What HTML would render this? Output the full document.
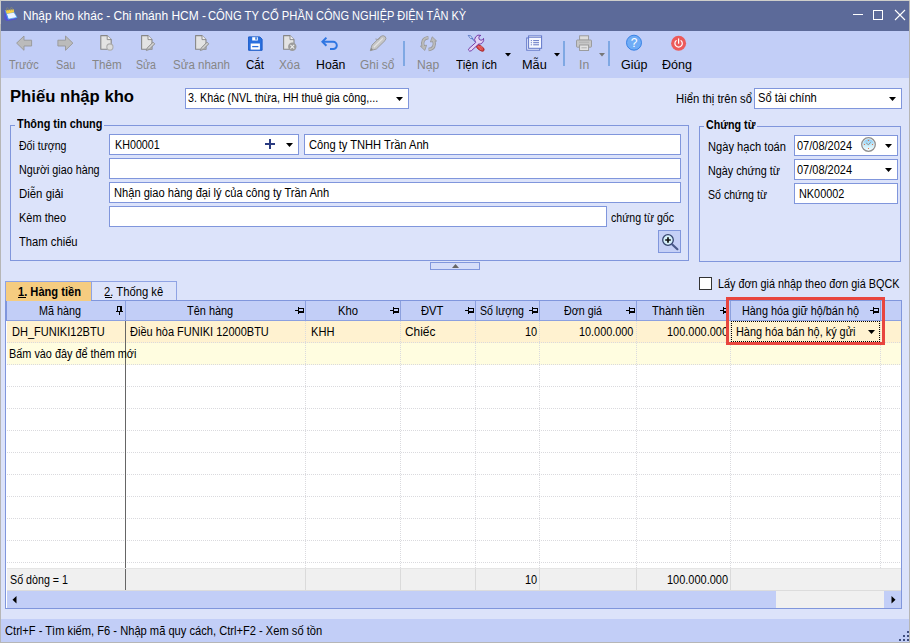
<!DOCTYPE html>
<html lang="vi"><head><meta charset="utf-8"><title>Nhập kho khác</title>
<style>
html,body{margin:0;padding:0}
body{width:910px;height:643px;position:relative;overflow:hidden;background:#DCE3FA;font-family:"Liberation Sans",sans-serif;font-size:12px;color:#000}
.t{position:absolute;white-space:nowrap;line-height:20px;transform-origin:0 50%}
.r{position:absolute;box-sizing:border-box}
</style></head><body>
<div class="r" style="left:0px;top:0px;width:910px;height:643px;background:#B6B6B6;"></div>
<div class="r" style="left:1px;top:1px;width:908px;height:640px;background:#DCE3FA;"></div>
<div class="r" style="left:0px;top:0px;width:910px;height:1px;background:#CECECA;"></div>
<div class="r" style="left:0px;top:0px;width:1px;height:24px;background:#CACAC8;"></div>
<div class="r" style="left:1px;top:1px;width:908px;height:30px;background:#5C6A99;"></div>
<div class="t" style="left:23.2px;top:6px;color:#fff;transform:scaleX(0.9977);">Nhập kho khác - Chi nhánh HCM -</div>
<div class="t" style="left:208.2px;top:6px;color:#fff;transform:scaleX(0.9354);">CÔNG TY CỔ PHẦN</div>
<div class="t" style="left:315.6px;top:6px;color:#fff;transform:scaleX(0.9182);">CÔNG NGHIỆP ĐIỆN TÂN KỲ</div>
<svg class="r" style="left:3px;top:5px" width="16" height="18" viewBox="3 5 16 18"><path d="M4.3 9.8 L5.3 10.3 L8.2 19 L16.6 17.6 L16.2 19.5 L6.8 21 L4.4 19.2 Z" fill="#5552D2"/><path d="M6.2 13.6 L14 12.2 L17.1 17.4 L8.2 19.2 Z" fill="#ECF3FF" stroke="#46A2F0" stroke-width="0.7" stroke-linejoin="round"/><path d="M5.1 10.3 L13.7 9.2 L14.1 12.3 L6.3 13.8 Z" fill="#F7D044"/><path d="M5.1 10.3 L6.3 13.8 L8.2 19.2" fill="none" stroke="#3C8CF0" stroke-width="0.8"/><path d="M6.6 11.2 V8.6 Q7.4 6.6 8.2 8.6 V10.8 M10.6 10.6 V8.2 Q11.5 6.2 12.4 8.2 V10.4" fill="none" stroke="#8E8C6E" stroke-width="0.7"/></svg>
<svg class="r" style="left:850px;top:8px" width="58" height="14" viewBox="0 0 58 14"><path d="M3 6.5 H13" stroke="#fff" stroke-width="1"/><rect x="23.5" y="2.5" width="9" height="9" fill="none" stroke="#fff" stroke-width="1"/><path d="M45 2 L55 12 M55 2 L45 12" stroke="#fff" stroke-width="1.1"/></svg>
<div class="r" style="left:1px;top:31px;width:908px;height:47px;background:#C2CEF7;"></div>
<div class="t" style="left:8.8px;top:55px;color:#868686;transform:scaleX(0.9090);">Trước</div>
<div class="t" style="left:55.6px;top:55px;color:#868686;transform:scaleX(0.9086);">Sau</div>
<div class="t" style="left:91.6px;top:55px;color:#868686;transform:scaleX(0.9715);">Thêm</div>
<div class="t" style="left:136.2px;top:55px;color:#868686;transform:scaleX(0.8806);">Sửa</div>
<div class="t" style="left:173.2px;top:55px;color:#868686;transform:scaleX(0.9594);">Sửa nhanh</div>
<div class="t" style="left:245.6px;top:55px;transform:scaleX(0.9639);">Cắt</div>
<div class="t" style="left:279.2px;top:55px;color:#868686;transform:scaleX(0.9835);">Xóa</div>
<div class="t" style="left:315.6px;top:55px;transform:scaleX(1.0248);">Hoãn</div>
<div class="t" style="left:360.2px;top:55px;color:#868686;transform:scaleX(0.9919);">Ghi sổ</div>
<div class="t" style="left:416.8px;top:55px;color:#868686;transform:scaleX(1.0085);">Nạp</div>
<div class="t" style="left:455.6px;top:55px;transform:scaleX(0.9706);">Tiện ích</div>
<div class="t" style="left:521.8px;top:55px;transform:scaleX(1.0624);">Mẫu</div>
<div class="t" style="left:578.8px;top:55px;color:#868686;transform:scaleX(1.0192);">In</div>
<div class="t" style="left:621.2px;top:55px;transform:scaleX(1.0415);">Giúp</div>
<div class="t" style="left:662.2px;top:55px;transform:scaleX(1.0458);">Đóng</div>
<div class="r" style="left:403px;top:41px;width:1.6px;height:24.6px;background:#7FA8E3;"></div>
<div class="r" style="left:563px;top:41px;width:1.6px;height:24.6px;background:#7FA8E3;"></div>
<div class="r" style="left:608px;top:41px;width:1.6px;height:24.6px;background:#7FA8E3;"></div>
<svg class="r" style="left:504.5px;top:52.5px" width="6" height="4" viewBox="0 0 6 4"><path d="M0 0 H6 L3 3.5 Z" fill="#000"/></svg>
<svg class="r" style="left:554px;top:52.5px" width="6" height="4" viewBox="0 0 6 4"><path d="M0 0 H6 L3 3.5 Z" fill="#000"/></svg>
<svg class="r" style="left:599px;top:52.5px" width="6" height="4" viewBox="0 0 6 4"><path d="M0 0 H6 L3 3.5 Z" fill="#777"/></svg>
<svg class="r" style="left:15px;top:34px" width="19" height="18" viewBox="15 34 19 18"><path d="M16.6 43.1 L24 36 V40.2 H31.6 V46 H24 V50.3 Z" fill="#BBBBBB" stroke="#969696" stroke-width="0.9" stroke-linejoin="miter"/></svg>
<svg class="r" style="left:56px;top:34px" width="19" height="18" viewBox="56 34 19 18"><path d="M72.9 43.1 L65.5 36 V40.2 H57.9 V46 H65.5 V50.3 Z" fill="#BBBBBB" stroke="#969696" stroke-width="0.9" stroke-linejoin="miter"/></svg>
<svg class="r" style="left:99px;top:34px" width="17" height="19" viewBox="99 34 17 19"><path d="M100.8 35.6 H107.2 L111.2 39.6 V49.2 H100.8 Z" fill="#E3E3E3" stroke="#878787" stroke-width="1.1" stroke-linejoin="round"/><path d="M107.2 35.6 V39.6 H111.2" fill="#EFEFEF" stroke="#878787" stroke-width="0.9" stroke-linejoin="round"/><circle cx="109.9" cy="47" r="3.1" fill="#DCDCDC" stroke="#ADADAD" stroke-width="1.1"/></svg>
<svg class="r" style="left:140px;top:34px" width="17" height="19" viewBox="140 34 17 19"><path d="M141.6 35.6 H148 L152 39.6 V49.2 H141.6 Z" fill="#E3E3E3" stroke="#878787" stroke-width="1.1" stroke-linejoin="round"/><path d="M148 35.6 V39.6 H152" fill="#EFEFEF" stroke="#878787" stroke-width="0.9" stroke-linejoin="round"/><path d="M146.3 50.6 L147.3 47.8 L153 42.1 L154.8 43.9 L149.1 49.6 Z" fill="#BDBDBD" stroke="#8C8C8C" stroke-width="0.8" stroke-linejoin="round"/><path d="M148.6 48.2 L153.4 43.4" stroke="#E8E8E8" stroke-width="0.7"/></svg>
<svg class="r" style="left:194px;top:34px" width="17" height="19" viewBox="194 34 17 19"><path d="M195.6 35.6 H202 L206 39.6 V49.2 H195.6 Z" fill="#E3E3E3" stroke="#878787" stroke-width="1.1" stroke-linejoin="round"/><path d="M202 35.6 V39.6 H206" fill="#EFEFEF" stroke="#878787" stroke-width="0.9" stroke-linejoin="round"/><path d="M200.3 50.6 L201.3 47.8 L207 42.1 L208.8 43.9 L203.1 49.6 Z" fill="#BDBDBD" stroke="#8C8C8C" stroke-width="0.8" stroke-linejoin="round"/><path d="M202.6 48.2 L207.4 43.4" stroke="#E8E8E8" stroke-width="0.7"/></svg>
<svg class="r" style="left:247px;top:35px" width="17" height="17" viewBox="247 35 17 17"><path d="M248.6 36.9 H259.8 L262.1 39.2 V50.3 H248.6 Z" fill="#2A70DE" stroke="#1C5CC8" stroke-width="1" stroke-linejoin="round"/><rect x="252.2" y="37.2" width="5.6" height="3.3" fill="#fff"/><rect x="255.3" y="37.2" width="1.5" height="2.5" fill="#2A70DE"/><rect x="250.7" y="43.5" width="9.2" height="6.1" fill="#fff"/><path d="M252.2 46.6 H258.4" stroke="#2A70DE" stroke-width="1.3"/></svg>
<svg class="r" style="left:282px;top:34px" width="17" height="19" viewBox="282 34 17 19"><path d="M283.6 35.6 H290 L294 39.6 V49.2 H283.6 Z" fill="#E3E3E3" stroke="#878787" stroke-width="1.1" stroke-linejoin="round"/><path d="M290 35.6 V39.6 H294" fill="#EFEFEF" stroke="#878787" stroke-width="0.9" stroke-linejoin="round"/><circle cx="292.3" cy="46.8" r="4.2" fill="#9C9C9C"/><path d="M290.4 44.9 L294.2 48.7 M294.2 44.9 L290.4 48.7" stroke="#EDEDED" stroke-width="1.1"/></svg>
<svg class="r" style="left:320px;top:35px" width="20" height="17" viewBox="320 35 20 17"><path d="M326.4 37.6 L322.4 41.8 L326.4 45.8" fill="none" stroke="#2F76E2" stroke-width="2" stroke-linejoin="miter"/><path d="M323.2 41.8 H333.2 A3.6 3.6 0 0 1 333.2 49 H330" fill="none" stroke="#2F76E2" stroke-width="2"/></svg>
<svg class="r" style="left:369px;top:34px" width="18" height="18" viewBox="369 34 18 18"><path d="M370.3 50.7 L372 45 L380.8 36.4 Q383.2 34.8 385.2 36.6 Q386.8 38.6 385 40.6 L376.4 49 Z" fill="#C6C6C6" stroke="#979797" stroke-width="0.9" stroke-linejoin="round"/><path d="M373.8 47.2 L382.8 38.4" stroke="#E4E4E4" stroke-width="1.2"/><path d="M375.4 39 L378.4 39.6 L380.4 37.4" fill="none" stroke="#979797" stroke-width="0.9"/><path d="M370.3 50.7 L371.2 47.8 L373 49.6 Z" fill="#8A8A8A"/></svg>
<svg class="r" style="left:419px;top:35px" width="19" height="17" viewBox="419 35 19 17"><path d="M428.4 37.7 C423.2 38.2 421.8 42 423.2 46.4" fill="none" stroke="#969696" stroke-width="3.3"/><path d="M420.4 46.2 L426.6 45.2 L424.8 50.4 Z" fill="#BBBBBB" stroke="#969696" stroke-width="0.8" stroke-linejoin="round"/><path d="M428.2 37.7 C423.2 38.2 421.8 42 423.3 46.8" fill="none" stroke="#BBBBBB" stroke-width="1.8"/><path d="M428.6 49.5 C433.8 49 435.2 45.2 433.8 40.8" fill="none" stroke="#969696" stroke-width="3.3"/><path d="M436.6 41 L430.4 42 L432.2 36.8 Z" fill="#BBBBBB" stroke="#969696" stroke-width="0.8" stroke-linejoin="round"/><path d="M428.8 49.5 C433.8 49 435.2 45.2 433.7 40.4" fill="none" stroke="#BBBBBB" stroke-width="1.8"/></svg>
<svg class="r" style="left:467px;top:34px" width="18" height="18" viewBox="467 34 18 18"><path d="M468.2 35.4 L470.8 35.9 L472.8 38.8 L470.4 38.4 Z" fill="#EEF4FF" stroke="#4668BE" stroke-width="0.8" stroke-linejoin="round"/><path d="M472.2 38.4 L475 41.8" stroke="#4668BE" stroke-width="1"/><path d="M475.8 44.6 L477.6 43.6 L479 44.8" fill="none" stroke="#7A2C9E" stroke-width="0.9"/><ellipse cx="480.3" cy="48" rx="4.4" ry="2.1" transform="rotate(34 480.3 48)" fill="#DE4E4C" stroke="#A31C1C" stroke-width="0.9"/><path d="M478.2 46 L479.8 47.4 M479.6 48.4 L481.2 49.6 M480 45.6 L482.6 47.8" stroke="#F0908C" stroke-width="0.6"/><path d="M469 48.5 L475.75 42.5 A4.5 4.5 0 0 1 480.87 35.42 A2.4 2.4 0 1 0 483.53 38.38 A4.5 4.5 0 0 1 478.65 44.07 L471.4 50.7 Q469.4 51.9 468.6 50.2 Q468.2 49.2 469 48.5 Z" fill="#E2D4F5" stroke="#6C2E9E" stroke-width="0.9" stroke-linejoin="round"/></svg>
<svg class="r" style="left:525px;top:34px" width="19" height="18" viewBox="525 34 19 18"><rect x="526.7" y="38" width="13" height="12.2" fill="#EEF2FF" stroke="#6277C8" stroke-width="1"/><rect x="528.6" y="35.9" width="13" height="12.4" fill="#F6F8FF" stroke="#6277C8" stroke-width="1"/><path d="M528.6 37.4 H541.6" stroke="#6277C8" stroke-width="0.8"/><path d="M533.2 40.6 H539 M533.2 42.7 H539 M533.2 44.8 H539" stroke="#5468BC" stroke-width="0.9"/><path d="M530.8 40.6 H531.9 M530.8 42.7 H531.9 M530.8 44.8 H531.9" stroke="#5468BC" stroke-width="0.9"/></svg>
<svg class="r" style="left:575px;top:34px" width="18" height="18" viewBox="575 34 18 18"><rect x="579.6" y="35.8" width="9" height="4.4" fill="#DDDDDD" stroke="#969696" stroke-width="0.9"/><rect x="576.5" y="40" width="15" height="7.2" rx="0.8" fill="#C6C6C6" stroke="#969696" stroke-width="0.9"/><path d="M579 42.2 H589" stroke="#AFAFAF" stroke-width="0.9"/><rect x="579.6" y="45" width="9" height="5.5" fill="#E2E2E2" stroke="#969696" stroke-width="0.9"/><path d="M581.4 47.8 H586.8" stroke="#ABABAB" stroke-width="0.9"/></svg>
<svg class="r" style="left:625px;top:33px" width="19" height="19" viewBox="625 33 19 19"><circle cx="634" cy="42.7" r="7.5" fill="#6FACF6" stroke="#2E7BE2" stroke-width="0.9"/><text x="634" y="47" text-anchor="middle" font-family="Liberation Sans, sans-serif" font-size="12" fill="#fff">?</text></svg>
<svg class="r" style="left:670px;top:34px" width="18" height="18" viewBox="670 34 18 18"><circle cx="678.6" cy="43.2" r="7.5" fill="#EC5A5A"/><path d="M676.2 40.6 A3.7 3.7 0 1 0 681 40.6" fill="none" stroke="#fff" stroke-width="1.2" stroke-linecap="round"/><path d="M678.6 38.8 V43.2" stroke="#fff" stroke-width="1.2" stroke-linecap="round"/></svg>
<div class="t" style="left:10.2px;top:87px;font-size:16px;font-weight:bold;transform:scaleX(1.0410);">Phiếu nhập kho</div>
<div class="r" style="left:185px;top:88px;width:224px;height:21px;background:#fff;border:1px solid #8096DC;"></div>
<div class="t" style="left:187.6px;top:88px;transform:scaleX(0.8984);">3. Khác (NVL thừa, HH thuê gia công,...</div>
<svg class="r" style="left:396px;top:97px" width="8" height="4" viewBox="0 0 8 4"><path d="M0 0 H7 L3.5 4 Z" fill="#000"/></svg>
<div class="t" style="left:675.6px;top:89px;transform:scaleX(0.9417);">Hiển thị trên sổ</div>
<div class="r" style="left:754px;top:88px;width:148px;height:21px;background:#fff;border:1px solid #8096DC;"></div>
<div class="t" style="left:758.2px;top:88px;transform:scaleX(0.9278);">Sổ tài chính</div>
<svg class="r" style="left:889px;top:97px" width="8" height="4" viewBox="0 0 8 4"><path d="M0 0 H7 L3.5 4 Z" fill="#000"/></svg>
<div class="r" style="left:10px;top:125px;width:679px;height:136px;border:1px solid #8096DC;"></div>
<div class="r" style="left:15px;top:119px;width:89px;height:12px;background:#DCE3FA;"></div>
<div class="t" style="left:17.2px;top:114px;font-weight:bold;transform:scaleX(0.9088);">Thông tin chung</div>
<div class="r" style="left:699px;top:126px;width:202px;height:136px;border:1px solid #8096DC;"></div>
<div class="r" style="left:704px;top:120px;width:53px;height:12px;background:#DCE3FA;"></div>
<div class="t" style="left:706.2px;top:115px;font-weight:bold;transform:scaleX(0.8923);">Chứng từ</div>
<div class="r" style="left:109px;top:134px;width:190px;height:21px;background:#fff;border:1px solid #8096DC;"></div>
<div class="r" style="left:304px;top:134px;width:377px;height:21px;background:#fff;border:1px solid #8096DC;"></div>
<div class="r" style="left:109px;top:158px;width:572px;height:21px;background:#fff;border:1px solid #8096DC;"></div>
<div class="r" style="left:109px;top:182px;width:572px;height:21px;background:#fff;border:1px solid #8096DC;"></div>
<div class="r" style="left:109px;top:206px;width:498px;height:21px;background:#fff;border:1px solid #8096DC;"></div>
<div class="t" style="left:18.6px;top:136px;transform:scaleX(0.8790);">Đối tượng</div>
<div class="t" style="left:18.6px;top:160px;transform:scaleX(0.8960);">Người giao hàng</div>
<div class="t" style="left:18.6px;top:184px;transform:scaleX(0.9509);">Diễn giải</div>
<div class="t" style="left:18.6px;top:208px;transform:scaleX(0.9151);">Kèm theo</div>
<div class="t" style="left:18.6px;top:232px;transform:scaleX(0.9347);">Tham chiếu</div>
<div class="t" style="left:114.8px;top:135px;transform:scaleX(0.8953);">KH00001</div>
<div class="t" style="left:308.8px;top:135px;transform:scaleX(0.9273);">Công ty TNHH Trần Anh</div>
<div class="t" style="left:113.6px;top:183px;transform:scaleX(0.9269);">Nhận giao hàng đại lý của công ty Trần Anh</div>
<div class="t" style="left:611.2px;top:208px;transform:scaleX(0.8819);">chứng từ gốc</div>
<svg class="r" style="left:265px;top:139px" width="10" height="10" viewBox="0 0 10 10"><path d="M5 0 V10 M0 5 H10" stroke="#2A3A80" stroke-width="2"/></svg>
<svg class="r" style="left:286px;top:143.4px" width="8" height="4" viewBox="0 0 8 4"><path d="M0 0 H7 L3.5 4 Z" fill="#000"/></svg>
<div class="r" style="left:658px;top:230px;width:23px;height:23px;background:#C5D0F6;border:1px solid #8096DC;"></div>
<svg class="r" style="left:659px;top:231px" width="21" height="21" viewBox="659 231 21 21"><circle cx="668" cy="240" r="5.3" fill="#D6F1FA" stroke="#36456F" stroke-width="1.3"/><path d="M668 237.2 V242.8 M665.2 240 H670.8" stroke="#111" stroke-width="1.7"/><path d="M672 244.2 L677.4 249.2" stroke="#4A5A8A" stroke-width="2.2" stroke-linecap="round"/></svg>
<div class="t" style="left:707.6px;top:137px;transform:scaleX(0.9279);">Ngày hạch toán</div>
<div class="t" style="left:707.6px;top:161px;transform:scaleX(0.8988);">Ngày chứng từ</div>
<div class="t" style="left:707.6px;top:185px;transform:scaleX(0.8837);">Số chứng từ</div>
<div class="r" style="left:794px;top:135px;width:104px;height:21px;background:#fff;border:1px solid #8096DC;"></div>
<div class="r" style="left:794px;top:159px;width:104px;height:21px;background:#fff;border:1px solid #8096DC;"></div>
<div class="r" style="left:794px;top:183px;width:104px;height:21px;background:#fff;border:1px solid #8096DC;"></div>
<div class="t" style="left:797.2px;top:136px;transform:scaleX(0.9158);">07/08/2024</div>
<div class="t" style="left:797.2px;top:160px;transform:scaleX(0.9158);">07/08/2024</div>
<div class="t" style="left:798.8px;top:184px;transform:scaleX(0.9073);">NK00002</div>
<svg class="r" style="left:885px;top:144.2px" width="8" height="4" viewBox="0 0 8 4"><path d="M0 0 H7 L3.5 4 Z" fill="#000"/></svg>
<svg class="r" style="left:885px;top:168.2px" width="8" height="4" viewBox="0 0 8 4"><path d="M0 0 H7 L3.5 4 Z" fill="#000"/></svg>
<svg class="r" style="left:860px;top:136px" width="17" height="17" viewBox="860 136 17 17"><defs><linearGradient id="ck" x1="0" y1="0" x2="0" y2="1"><stop offset="0" stop-color="#86C8F2"/><stop offset="0.55" stop-color="#C6ECFA"/><stop offset="1" stop-color="#F2FDFF"/></linearGradient></defs><circle cx="868.5" cy="144.5" r="6.8" fill="#F4F6F8" stroke="#8E8E8E" stroke-width="1.3"/><circle cx="868.5" cy="144.5" r="5.6" fill="url(#ck)"/><path d="M868.5 144.8 L866.2 143 M868.5 144.8 L870.6 142.4" stroke="#777" stroke-width="0.8" fill="none"/><circle cx="868.5" cy="140.5" r="0.6" fill="#F0602E"/><circle cx="868.5" cy="148.5" r="0.6" fill="#F0602E"/><circle cx="864.5" cy="144.5" r="0.6" fill="#F0602E"/><circle cx="872.5" cy="144.5" r="0.6" fill="#F0602E"/></svg>
<div class="r" style="left:430px;top:262px;width:50px;height:8px;background:#D5DDF9;border:1px solid #8096DC;"></div>
<svg class="r" style="left:452px;top:264px" width="7" height="4" viewBox="0 0 7 4"><path d="M0 4 H7 L3.5 0 Z" fill="#666"/></svg>
<div class="r" style="left:699px;top:277px;width:13px;height:13px;background:#fff;border:1px solid #333;"></div>
<div class="t" style="left:718.2px;top:274px;transform:scaleX(0.9016);">Lấy đơn giá nhập theo đơn giá BQCK</div>
<div class="r" style="left:91px;top:281px;width:86px;height:20px;background:#DCE3FA;border:1px solid #8FA3E4;"></div>
<div class="r" style="left:5px;top:281px;width:87px;height:20px;background:#F5CC80;border:1px solid #8FA3E4;border-bottom:none;"></div>
<div class="t" style="left:17.6px;top:282px;font-weight:bold;transform:scaleX(0.9263);">1. Hàng tiền</div>
<div class="r" style="left:18px;top:297px;width:8px;height:1px;background:#000;"></div>
<div class="t" style="left:104.2px;top:282px;transform:scaleX(0.9373);">2. Thống kê</div>
<div class="r" style="left:105px;top:297px;width:7px;height:1px;background:#000;"></div>
<div class="r" style="left:5px;top:300px;width:897px;height:309px;background:#fff;border:1px solid #8096DC;"></div>
<div class="r" style="left:6px;top:301px;width:1px;height:20px;background:#8096DC;"></div>
<div class="r" style="left:7px;top:301px;width:894px;height:19px;background:#C2CEF7;"></div>
<div class="r" style="left:7px;top:320px;width:894px;height:1px;background:#8CA0E0;"></div>
<div class="r" style="left:7px;top:321px;width:894px;height:22px;background:#FFF2D0;"></div>
<div class="r" style="left:7px;top:343px;width:894px;height:22px;background:#FFFDE0;"></div>
<div class="r" style="left:7px;top:568px;width:894px;height:23px;background:#F0F0F0;"></div>
<div class="r" style="left:7px;top:590px;width:894px;height:1px;background:#DCDCDC;"></div>
<div class="r" style="left:7px;top:342px;width:894px;height:1px;background:repeating-linear-gradient(90deg,#DADADE 0 1px,transparent 1px 2px)"></div>
<div class="r" style="left:7px;top:364px;width:894px;height:1px;background:repeating-linear-gradient(90deg,#DADADE 0 1px,transparent 1px 2px)"></div>
<div class="r" style="left:7px;top:386px;width:894px;height:1px;background:repeating-linear-gradient(90deg,#DADADE 0 1px,transparent 1px 2px)"></div>
<div class="r" style="left:7px;top:408px;width:894px;height:1px;background:repeating-linear-gradient(90deg,#DADADE 0 1px,transparent 1px 2px)"></div>
<div class="r" style="left:7px;top:430px;width:894px;height:1px;background:repeating-linear-gradient(90deg,#DADADE 0 1px,transparent 1px 2px)"></div>
<div class="r" style="left:7px;top:452px;width:894px;height:1px;background:repeating-linear-gradient(90deg,#DADADE 0 1px,transparent 1px 2px)"></div>
<div class="r" style="left:7px;top:474px;width:894px;height:1px;background:repeating-linear-gradient(90deg,#DADADE 0 1px,transparent 1px 2px)"></div>
<div class="r" style="left:7px;top:496px;width:894px;height:1px;background:repeating-linear-gradient(90deg,#DADADE 0 1px,transparent 1px 2px)"></div>
<div class="r" style="left:7px;top:518px;width:894px;height:1px;background:repeating-linear-gradient(90deg,#DADADE 0 1px,transparent 1px 2px)"></div>
<div class="r" style="left:7px;top:540px;width:894px;height:1px;background:repeating-linear-gradient(90deg,#DADADE 0 1px,transparent 1px 2px)"></div>
<div class="r" style="left:7px;top:562px;width:894px;height:1px;background:repeating-linear-gradient(90deg,#DADADE 0 1px,transparent 1px 2px)"></div>
<div class="r" style="left:305px;top:321px;width:1px;height:247px;background:repeating-linear-gradient(180deg,#DADADE 0 1px,transparent 1px 2px)"></div>
<div class="r" style="left:305px;top:301px;width:1px;height:19px;background:#8CA0DE;"></div>
<div class="r" style="left:305px;top:569px;width:1px;height:21px;background:#DADADA;"></div>
<div class="r" style="left:400px;top:321px;width:1px;height:247px;background:repeating-linear-gradient(180deg,#DADADE 0 1px,transparent 1px 2px)"></div>
<div class="r" style="left:400px;top:301px;width:1px;height:19px;background:#8CA0DE;"></div>
<div class="r" style="left:400px;top:569px;width:1px;height:21px;background:#DADADA;"></div>
<div class="r" style="left:475px;top:321px;width:1px;height:247px;background:repeating-linear-gradient(180deg,#DADADE 0 1px,transparent 1px 2px)"></div>
<div class="r" style="left:475px;top:301px;width:1px;height:19px;background:#8CA0DE;"></div>
<div class="r" style="left:475px;top:569px;width:1px;height:21px;background:#DADADA;"></div>
<div class="r" style="left:539px;top:321px;width:1px;height:247px;background:repeating-linear-gradient(180deg,#DADADE 0 1px,transparent 1px 2px)"></div>
<div class="r" style="left:539px;top:301px;width:1px;height:19px;background:#8CA0DE;"></div>
<div class="r" style="left:539px;top:569px;width:1px;height:21px;background:#DADADA;"></div>
<div class="r" style="left:636px;top:321px;width:1px;height:247px;background:repeating-linear-gradient(180deg,#DADADE 0 1px,transparent 1px 2px)"></div>
<div class="r" style="left:636px;top:301px;width:1px;height:19px;background:#8CA0DE;"></div>
<div class="r" style="left:636px;top:569px;width:1px;height:21px;background:#DADADA;"></div>
<div class="r" style="left:730px;top:321px;width:1px;height:247px;background:repeating-linear-gradient(180deg,#DADADE 0 1px,transparent 1px 2px)"></div>
<div class="r" style="left:730px;top:301px;width:1px;height:19px;background:#8CA0DE;"></div>
<div class="r" style="left:730px;top:569px;width:1px;height:21px;background:#DADADA;"></div>
<div class="r" style="left:880px;top:321px;width:1px;height:247px;background:repeating-linear-gradient(180deg,#DADADE 0 1px,transparent 1px 2px)"></div>
<div class="r" style="left:880px;top:301px;width:1px;height:19px;background:#8CA0DE;"></div>
<div class="r" style="left:125px;top:301px;width:1px;height:19px;background:#8CA0DE;"></div>
<div class="r" style="left:125px;top:321px;width:1px;height:269px;background:#666;"></div>
<div class="r" style="left:6px;top:300px;width:85px;height:1px;background:#F5CC80;"></div>
<div class="r" style="left:7px;top:568px;width:894px;height:1px;background:#E4E4E4;"></div>
<div class="t" style="left:39.2px;top:301px;transform:scaleX(0.8994);">Mã hàng</div>
<div class="t" style="left:186.8px;top:301px;transform:scaleX(0.9111);">Tên hàng</div>
<div class="t" style="left:337.6px;top:301px;transform:scaleX(0.9367);">Kho</div>
<div class="t" style="left:421.2px;top:301px;transform:scaleX(0.9333);">ĐVT</div>
<div class="t" style="left:480.2px;top:301px;transform:scaleX(0.8813);">Số lượng</div>
<div class="t" style="left:563.6px;top:301px;transform:scaleX(0.8929);">Đơn giá</div>
<div class="t" style="left:651.8px;top:301px;transform:scaleX(0.9240);">Thành tiền</div>
<div class="t" style="left:741.6px;top:301px;transform:scaleX(0.9037);">Hàng hóa giữ hộ/bán hộ</div>
<svg class="r" style="left:116px;top:306px" width="7" height="9" viewBox="116 306 7 9" shape-rendering="crispEdges" fill="#000"><rect x="117" y="306" width="5" height="1"/><rect x="117" y="306" width="1" height="5"/><rect x="120" y="306" width="2" height="5"/><rect x="116" y="311" width="7" height="1"/><rect x="119" y="312" width="1" height="3"/></svg>
<svg class="r" style="left:295px;top:307px" width="9" height="7" viewBox="0 0 9 7" shape-rendering="crispEdges" fill="#000"><rect x="0" y="3" width="3" height="1"/><rect x="3" y="0" width="1" height="7"/><rect x="4" y="1" width="5" height="1"/><rect x="8" y="1" width="1" height="5"/><rect x="4" y="4" width="5" height="2"/></svg>
<svg class="r" style="left:390px;top:307px" width="9" height="7" viewBox="0 0 9 7" shape-rendering="crispEdges" fill="#000"><rect x="0" y="3" width="3" height="1"/><rect x="3" y="0" width="1" height="7"/><rect x="4" y="1" width="5" height="1"/><rect x="8" y="1" width="1" height="5"/><rect x="4" y="4" width="5" height="2"/></svg>
<svg class="r" style="left:465px;top:307px" width="9" height="7" viewBox="0 0 9 7" shape-rendering="crispEdges" fill="#000"><rect x="0" y="3" width="3" height="1"/><rect x="3" y="0" width="1" height="7"/><rect x="4" y="1" width="5" height="1"/><rect x="8" y="1" width="1" height="5"/><rect x="4" y="4" width="5" height="2"/></svg>
<svg class="r" style="left:529px;top:307px" width="9" height="7" viewBox="0 0 9 7" shape-rendering="crispEdges" fill="#000"><rect x="0" y="3" width="3" height="1"/><rect x="3" y="0" width="1" height="7"/><rect x="4" y="1" width="5" height="1"/><rect x="8" y="1" width="1" height="5"/><rect x="4" y="4" width="5" height="2"/></svg>
<svg class="r" style="left:626px;top:307px" width="9" height="7" viewBox="0 0 9 7" shape-rendering="crispEdges" fill="#000"><rect x="0" y="3" width="3" height="1"/><rect x="3" y="0" width="1" height="7"/><rect x="4" y="1" width="5" height="1"/><rect x="8" y="1" width="1" height="5"/><rect x="4" y="4" width="5" height="2"/></svg>
<svg class="r" style="left:720px;top:307px" width="9" height="7" viewBox="0 0 9 7" shape-rendering="crispEdges" fill="#000"><rect x="0" y="3" width="3" height="1"/><rect x="3" y="0" width="1" height="7"/><rect x="4" y="1" width="5" height="1"/><rect x="8" y="1" width="1" height="5"/><rect x="4" y="4" width="5" height="2"/></svg>
<svg class="r" style="left:870px;top:307px" width="9" height="7" viewBox="0 0 9 7" shape-rendering="crispEdges" fill="#000"><rect x="0" y="3" width="3" height="1"/><rect x="3" y="0" width="1" height="7"/><rect x="4" y="1" width="5" height="1"/><rect x="8" y="1" width="1" height="5"/><rect x="4" y="4" width="5" height="2"/></svg>
<div class="t" style="left:11.6px;top:322px;transform:scaleX(0.9197);">DH_FUNIKI12BTU</div>
<div class="t" style="left:130.2px;top:322px;transform:scaleX(0.9167);">Điều hòa FUNIKI 12000BTU</div>
<div class="t" style="left:310.8px;top:322px;transform:scaleX(0.9236);">KHH</div>
<div class="t" style="left:405.2px;top:322px;transform:scaleX(0.9909);">Chiếc</div>
<div class="t" style="left:524.8px;top:322px;transform:scaleX(0.9140);">10</div>
<div class="t" style="left:579.2px;top:322px;transform:scaleX(0.9058);">10.000.000</div>
<div class="t" style="left:667.2px;top:322px;transform:scaleX(0.9141);">100.000.000</div>
<div class="t" style="left:735.6px;top:322px;transform:scaleX(0.9083);">Hàng hóa bán hộ, ký gửi</div>
<svg class="r" style="left:868px;top:330px" width="8" height="4" viewBox="0 0 8 4"><path d="M0 0 H7 L3.5 4 Z" fill="#000"/></svg>
<div class="t" style="left:8.8px;top:344px;transform:scaleX(0.9061);">Bấm vào đây để thêm mới</div>
<div class="r" style="left:731px;top:321px;width:149px;height:21px;border:1px dotted #000;"></div>
<div class="t" style="left:9.6px;top:570px;transform:scaleX(0.8915);">Số dòng = 1</div>
<div class="t" style="left:524.8px;top:570px;transform:scaleX(0.9140);">10</div>
<div class="t" style="left:667.2px;top:570px;transform:scaleX(0.9141);">100.000.000</div>
<div class="r" style="left:7px;top:591px;width:894px;height:17px;background:#C2CEF7;"></div>
<div class="r" style="left:776px;top:591px;width:108px;height:17px;background:#F0F0F0;"></div>
<svg class="r" style="left:11.5px;top:596px" width="5" height="8" viewBox="0 0 5 8"><path d="M4.5 0 V7.5 L0.5 3.75 Z" fill="#000"/></svg>
<svg class="r" style="left:891px;top:596px" width="5" height="8" viewBox="0 0 5 8"><path d="M0.5 0 V7.5 L4.5 3.75 Z" fill="#000"/></svg>
<div class="r" style="left:726px;top:297px;width:159px;height:48px;border:3px solid #E8453E;"></div>
<div class="r" style="left:1px;top:619px;width:908px;height:23px;background:#C2CEF7;"></div>
<div class="t" style="left:5.2px;top:621px;transform:scaleX(0.9278);">Ctrl+F - Tìm kiếm, F6 - Nhập mã quy cách, Ctrl+F2 - Xem số tồn</div>
<svg class="r" style="left:898px;top:630px" width="12" height="12" viewBox="0 0 12 12"><rect x="9" y="1" width="2" height="2" fill="#3F4E7E"/><rect x="5" y="5" width="2" height="2" fill="#3F4E7E"/><rect x="9" y="5" width="2" height="2" fill="#3F4E7E"/><rect x="1" y="9" width="2" height="2" fill="#3F4E7E"/><rect x="5" y="9" width="2" height="2" fill="#3F4E7E"/><rect x="9" y="9" width="2" height="2" fill="#3F4E7E"/></svg>
</body></html>
